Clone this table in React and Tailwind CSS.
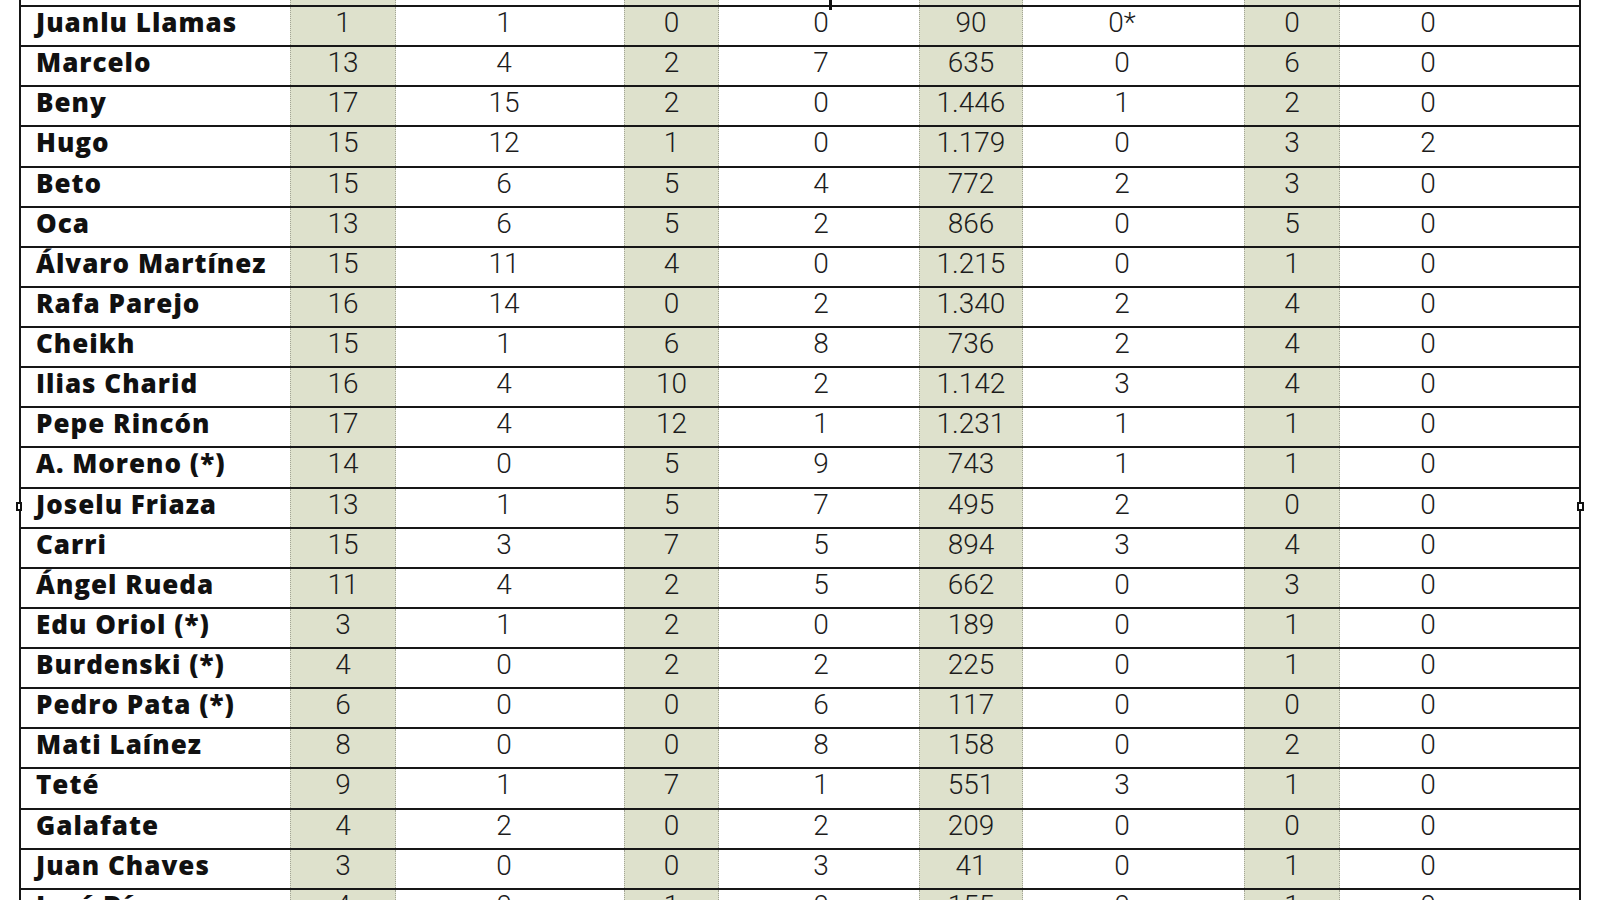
import React from "react";

const rows = [
  ["Juanlu Llamas", "1", "1", "0", "0", "90", "0*", "0", "0"],
  ["Marcelo", "13", "4", "2", "7", "635", "0", "6", "0"],
  ["Beny", "17", "15", "2", "0", "1.446", "1", "2", "0"],
  ["Hugo", "15", "12", "1", "0", "1.179", "0", "3", "2"],
  ["Beto", "15", "6", "5", "4", "772", "2", "3", "0"],
  ["Oca", "13", "6", "5", "2", "866", "0", "5", "0"],
  ["Álvaro Martínez", "15", "11", "4", "0", "1.215", "0", "1", "0"],
  ["Rafa Parejo", "16", "14", "0", "2", "1.340", "2", "4", "0"],
  ["Cheikh", "15", "1", "6", "8", "736", "2", "4", "0"],
  ["Ilias Charid", "16", "4", "10", "2", "1.142", "3", "4", "0"],
  ["Pepe Rincón", "17", "4", "12", "1", "1.231", "1", "1", "0"],
  ["A. Moreno (*)", "14", "0", "5", "9", "743", "1", "1", "0"],
  ["Joselu Friaza", "13", "1", "5", "7", "495", "2", "0", "0"],
  ["Carri", "15", "3", "7", "5", "894", "3", "4", "0"],
  ["Ángel Rueda", "11", "4", "2", "5", "662", "0", "3", "0"],
  ["Edu Oriol (*)", "3", "1", "2", "0", "189", "0", "1", "0"],
  ["Burdenski (*)", "4", "0", "2", "2", "225", "0", "1", "0"],
  ["Pedro Pata (*)", "6", "0", "0", "6", "117", "0", "0", "0"],
  ["Mati Laínez", "8", "0", "0", "8", "158", "0", "2", "0"],
  ["Teté", "9", "1", "7", "1", "551", "3", "1", "0"],
  ["Galafate", "4", "2", "0", "2", "209", "0", "0", "0"],
  ["Juan Chaves", "3", "0", "0", "3", "41", "0", "1", "0"],
  ["José Díaz", "4", "0", "1", "0", "155", "0", "1", "0"],
];

// shaded columns get the olive tint and dotted edges
const cellClass = [
  "bg-[#dee1cc] border-x border-dotted border-[#a3a596]",
  "pr-[12px]",
  "bg-[#dee1cc] border-x border-dotted border-[#a3a596]",
  "pl-[4px]",
  "bg-[#dee1cc] border-x border-dotted border-[#a3a596]",
  "pr-[23px]",
  "bg-[#dee1cc] border-x border-dotted border-[#a3a596]",
  "pr-[63px]",
];

const grid =
  "grid grid-cols-[269px_106px_228px_95px_200px_104px_221px_96px_239px]";

function Row({ row }) {
  return (
    <div className={`${grid} h-[40.14px] border-b-2 border-[#161616]`}>
      <div
        className="pl-[15px] pt-[2px] text-[26px] leading-none font-extrabold tracking-[1px] text-[#111] whitespace-nowrap"
        style={{ fontFamily: "'Open Sans', sans-serif" }}
      >
        {row[0]}
      </div>
      {row.slice(1).map((v, i) => (
        <div
          key={i}
          className={`${cellClass[i]} text-center pt-[2px] text-[28px] leading-none font-light text-[#1c1c1c]`}
          style={{ fontFamily: "Roboto, sans-serif" }}
        >
          {v}
        </div>
      ))}
    </div>
  );
}

export default function App() {
  return (
    <div className="relative h-[900px] w-[1600px] overflow-hidden bg-white">
      <div className="-mt-[33px] ml-[19px] w-[1562px] border-x-2 border-[#161616]">
        <div className={`${grid} h-[40px] border-b-2 border-[#161616]`}>
          <div />
          {cellClass.map((c, i) => (
            <div key={i} className={c} />
          ))}
        </div>
        {rows.map((r) => (
          <Row key={r[0]} row={r} />
        ))}
      </div>

      {/* selection handles */}
      <div className="absolute left-[829px] top-0 h-[10px] w-[3px] bg-[#111]" />
      <div className="absolute left-[16px] top-[502px] h-[9px] w-[6px] border-2 border-[#111] bg-white" />
      <div className="absolute left-[1577px] top-[502px] h-[9px] w-[7px] border-2 border-[#111] bg-white" />
    </div>
  );
}
